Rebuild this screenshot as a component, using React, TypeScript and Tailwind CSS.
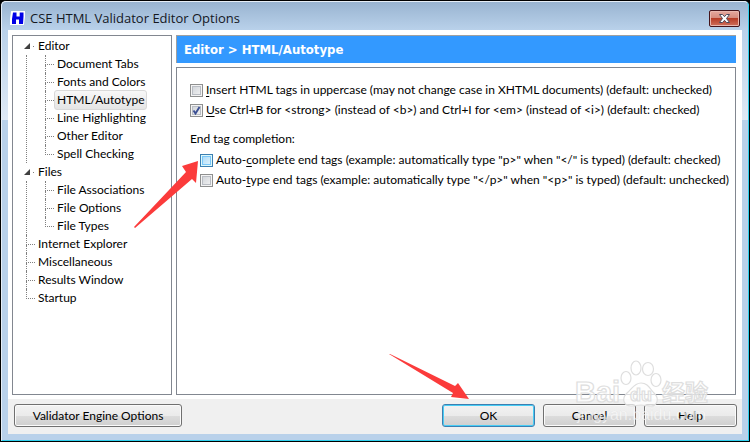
import React from "react";

type Node = { label: string; selected?: boolean; children?: Node[] };

const tree: Node[] = [
  {
    label: "Editor",
    children: [
      { label: "Document Tabs" },
      { label: "Fonts and Colors" },
      { label: "HTML/Autotype", selected: true },
      { label: "Line Highlighting" },
      { label: "Other Editor" },
      { label: "Spell Checking" },
    ],
  },
  {
    label: "Files",
    children: [{ label: "File Associations" }, { label: "File Options" }, { label: "File Types" }],
  },
  { label: "Internet Explorer" },
  { label: "Miscellaneous" },
  { label: "Results Window" },
  { label: "Startup" },
];

function Elbow({ last }: { last: boolean }) {
  return (
    <span className="flex w-[9px] shrink-0 flex-col">
      <span className="h-[10px] border-b border-l border-dotted border-[#808080]" />
      {!last && <span className="h-2 border-l border-dotted border-[#808080]" />}
    </span>
  );
}

function Expander() {
  return (
    <span className="flex h-[18px] w-[9px] shrink-0 items-center">
      <svg className="-ml-[2px] shrink-0" width="11" height="8" viewBox="0 0 11 8" aria-hidden="true">
        <path d="M6 1v6H0z" fill="#404040" />
        <path d="M9 4h1v1H9z" fill="#808080" />
      </svg>
    </span>
  );
}

function TreeLabel({ node }: { node: Node }) {
  return (
    <span
      className={
        node.selected
          ? "-my-px h-5 rounded-[3px] border border-[#d9d9d9] bg-linear-to-b from-[#f8f8f8] to-[#e5e5e5] px-[2px] leading-[18px]"
          : "px-[3px] leading-[18px]"
      }
    >
      {node.label}
    </span>
  );
}

function Tree() {
  return (
    <ul className="w-[160px] shrink-0 overflow-hidden border border-[#828790] bg-white py-px pl-[13px]">
      {tree.map((node, i) => (
        <li key={node.label}>
          <div className="flex h-[18px]">
            {node.children ? <Expander /> : <Elbow last={i === tree.length - 1} />}
            <TreeLabel node={node} />
          </div>
          {node.children && (
            <ul className="border-l border-dotted border-[#808080] pl-[18px]">
              {node.children.map((child, j) => (
                <li key={child.label} className="flex h-[18px]">
                  <Elbow last={j === node.children!.length - 1} />
                  <TreeLabel node={child} />
                </li>
              ))}
            </ul>
          )}
        </li>
      ))}
    </ul>
  );
}

function Check({
  id,
  checked,
  hot,
  children,
}: {
  id: string;
  checked?: boolean;
  hot?: boolean;
  children: React.ReactNode;
}) {
  return (
    <div className="flex h-5 items-center gap-[3px]">
      <span className="grid shrink-0 place-items-center">
        <input
          id={id}
          type="checkbox"
          defaultChecked={checked}
          className={
            hot
              ? "peer col-start-1 row-start-1 size-[13px] appearance-none border border-[#3c7fb1] bg-linear-to-br from-[#9fd5f5] to-[#eaf7fe] shadow-[inset_0_0_0_1px_#def9fa,inset_0_0_0_2px_#79c6f9]"
              : "peer col-start-1 row-start-1 size-[13px] appearance-none border border-[#8e8f8f] bg-linear-to-br from-[#cbcfd5] to-[#f6f6f6] shadow-[inset_0_0_0_1px_#f4f4f4,inset_0_0_0_2px_#b9bdc4]"
          }
        />
        <svg
          className="pointer-events-none invisible col-start-1 row-start-1 peer-checked:visible"
          width="9"
          height="9"
          viewBox="0 0 9 9"
          aria-hidden="true"
        >
          <path d="M1.5 4.5 3.5 7.5 7.5 1" fill="none" stroke="#3b4f93" strokeWidth="1.9" />
        </svg>
      </span>
      <label htmlFor={id}>{children}</label>
    </div>
  );
}

const U = ({ children }: { children: string }) => (
  <span className="underline underline-offset-2">{children}</span>
);

function PushButton({ primary, wide, children }: { primary?: boolean; wide?: boolean; children: string }) {
  return (
    <button
      type="button"
      className={`flex h-[23px] items-center justify-center rounded-[3px] border bg-[linear-gradient(#f2f2f2,#ebebeb_50%,#dddddd_50%,#cfcfcf)] ${
        wide ? "w-[168px]" : "w-[93px]"
      } ${
        primary
          ? "border-[#3c7fb1] shadow-[inset_0_0_0_1px_#48cdf5]"
          : "border-[#707070] shadow-[inset_0_0_0_1px_#fbfbfb]"
      }`}
    >
      {children}
    </button>
  );
}

function Arrow({ className, points, size }: { className: string; points: string; size: [number, number] }) {
  return (
    <svg
      className={`pointer-events-none absolute ${className}`}
      width={size[0]}
      height={size[1]}
      viewBox={`0 0 ${size[0]} ${size[1]}`}
      aria-hidden="true"
    >
      <polygon points={points} fill="#fb3b3b" />
    </svg>
  );
}

function Watermark() {
  return (
    <svg
      className="pointer-events-none absolute right-[36px] bottom-[14px]"
      width="140"
      height="70"
      viewBox="0 0 140 70"
      aria-hidden="true"
    >
      <g fill="#ffffff" fillOpacity="0.7" stroke="#dedede" strokeWidth="1.2">
        <ellipse cx="53" cy="21" rx="5" ry="6.5" />
        <ellipse cx="63" cy="11" rx="5" ry="7" />
        <ellipse cx="75" cy="12" rx="5.5" ry="6.5" />
        <ellipse cx="83" cy="23" rx="5" ry="6.5" />
        <path d="M68 26c7 0 9 6 13 10 6 6 3 13-3 13-4 0-6-1-10-1s-6 1-10 1c-7 0-10-7-4-13 5-4 7-10 14-10z" />
        <text x="2" y="45" fontSize="29" fontWeight="700" fontFamily="'Liberation Sans', sans-serif">
          Bai
        </text>
        <text x="57" y="44" fontSize="18" fontWeight="700" fontFamily="'Liberation Sans', sans-serif">
          du
        </text>
        <text x="89" y="44" fontSize="23" fontWeight="700" fontFamily="'Noto Sans CJK SC', sans-serif">
          经验
        </text>
      </g>
      <text
        x="4"
        y="63"
        fontSize="16"
        fill="#ffffff"
        fillOpacity="0.7"
        stroke="#c8c8c8"
        strokeOpacity="0.25"
        strokeWidth="0.5"
        fontFamily="'Liberation Sans', sans-serif"
      >
        jingyan.baidu.com
      </text>
    </svg>
  );
}

export default function App() {
  return (
    <div className="bg-black">
      <div className="relative flex min-h-screen flex-col rounded-t-md border border-black bg-[#b9d1ea] font-[Lato,'Open_Sans',sans-serif] text-[12px] leading-[18px] text-black">
        <div className="flex grow flex-col rounded-t-[5px] border border-t-[#e6eef7] border-r-[#2fd0ee] border-b-[#2fd0ee] border-l-[#e6eef7] bg-[linear-gradient(#99b4d1,#b9d1ea_28px,#dfe9f5_118px,#b9d1ea_118px)] px-[6px] pb-[6px]">
          <header className="flex h-7 items-center gap-1">
            <svg className="mt-[5px] ml-[2px]" width="16" height="15" viewBox="0 0 16 15" aria-hidden="true">
              <path d="M2 1h5v4h2V1h5v5l-1 7H8V9H7l-1 4H1V8z" fill="#fff" stroke="#fff" strokeWidth="2" />
              <path d="M3 1.500h3.500v4h3.200v-4H13.500v4L13 13H9V8.500H6V13H2V8z" fill="#0000e6" />
            </svg>
            <h1 className="mt-[4px] font-['Open_Sans',sans-serif] text-[13px] text-[#14181f]">
              CSE HTML Validator Editor Options
            </h1>
            <button
              type="button"
              aria-label="Close"
              className="mt-[4px] mr-[2px] ml-auto flex h-[17px] w-[31px] items-center justify-center rounded-[2px] border border-[#45141a] bg-[linear-gradient(#e6a99f,#d58a7c_48%,#b73d27_50%,#cf705c)] shadow-[inset_0_0_0_1px_#e9b7ae]"
            >
              <svg width="13" height="11" viewBox="0 0 13 11" aria-hidden="true">
                <path
                  d="M1.500 1.500h3l2 2.200 2-2.200h3L8.500 5.500l3 4h-3l-2-2.200-2 2.200h-3l3-4z"
                  fill="#fff"
                  stroke="#4b4a5c"
                />
              </svg>
            </button>
          </header>

          <main className="flex grow gap-1 bg-white pt-[5px] pr-[6px] pb-[4px] pl-1">
            <Tree />
            <section className="flex min-w-0 grow flex-col gap-1">
              <h2 className="flex h-7 items-center border-t border-l border-[#a0a0a0] bg-[#3399ff] pl-[7px] font-['DejaVu_Sans_Condensed','Noto_Sans',sans-serif] text-[13px] font-bold text-white">
                Editor &gt; HTML/Autotype
              </h2>
              <div className="grow overflow-hidden border border-[#828790] pt-3 pr-px pl-[13px]">
                <div className="overflow-hidden whitespace-nowrap">
                  <Check id="upper">
                    <U>I</U>nsert HTML tags in uppercase (may not change case in XHTML documents) (default:
                    unchecked)
                  </Check>
                  <Check id="ctrl" checked>
                    <U>U</U>se Ctrl+B for &lt;strong&gt; (instead of &lt;b&gt;) and Ctrl+I for &lt;em&gt; (instead
                    of &lt;i&gt;) (default: checked)
                  </Check>
                  <fieldset>
                    <legend className="pt-[10px] pb-[2px]">End tag completion:</legend>
                    <div className="pl-[10px]">
                      <Check id="complete" hot>
                        Auto-<U>c</U>omplete end tags (example: automatically type "p&gt;" when "&lt;/" is typed)
                        (default: checked)
                      </Check>
                      <Check id="type">
                        Auto-<U>t</U>ype end tags (example: automatically type "&lt;/p&gt;" when "&lt;p&gt;" is
                        typed) (default: unchecked)
                      </Check>
                    </div>
                  </fieldset>
                </div>
              </div>
            </section>
          </main>

          <footer className="flex h-[35px] gap-2 bg-[#f0f0f0] pt-[5px] pr-[5px] pl-[6px]">
            <PushButton wide>Validator Engine Options</PushButton>
            <span className="grow" />
            <PushButton primary>OK</PushButton>
            <PushButton>Cancel</PushButton>
            <PushButton>Help</PushButton>
          </footer>
        </div>

        <Arrow
          className="top-[158px] left-[131px]"
          size={[68, 70]}
          points="66,2 50,7 54,13 2,68 3,69 60,20 64,24"
        />
        <Arrow
          className="right-[277px] bottom-[40px]"
          size={[84, 48]}
          points="1,1 2,1 67,33 70,30 81,46 63,44 65,40"
        />
        <Watermark />
      </div>
    </div>
  );
}
